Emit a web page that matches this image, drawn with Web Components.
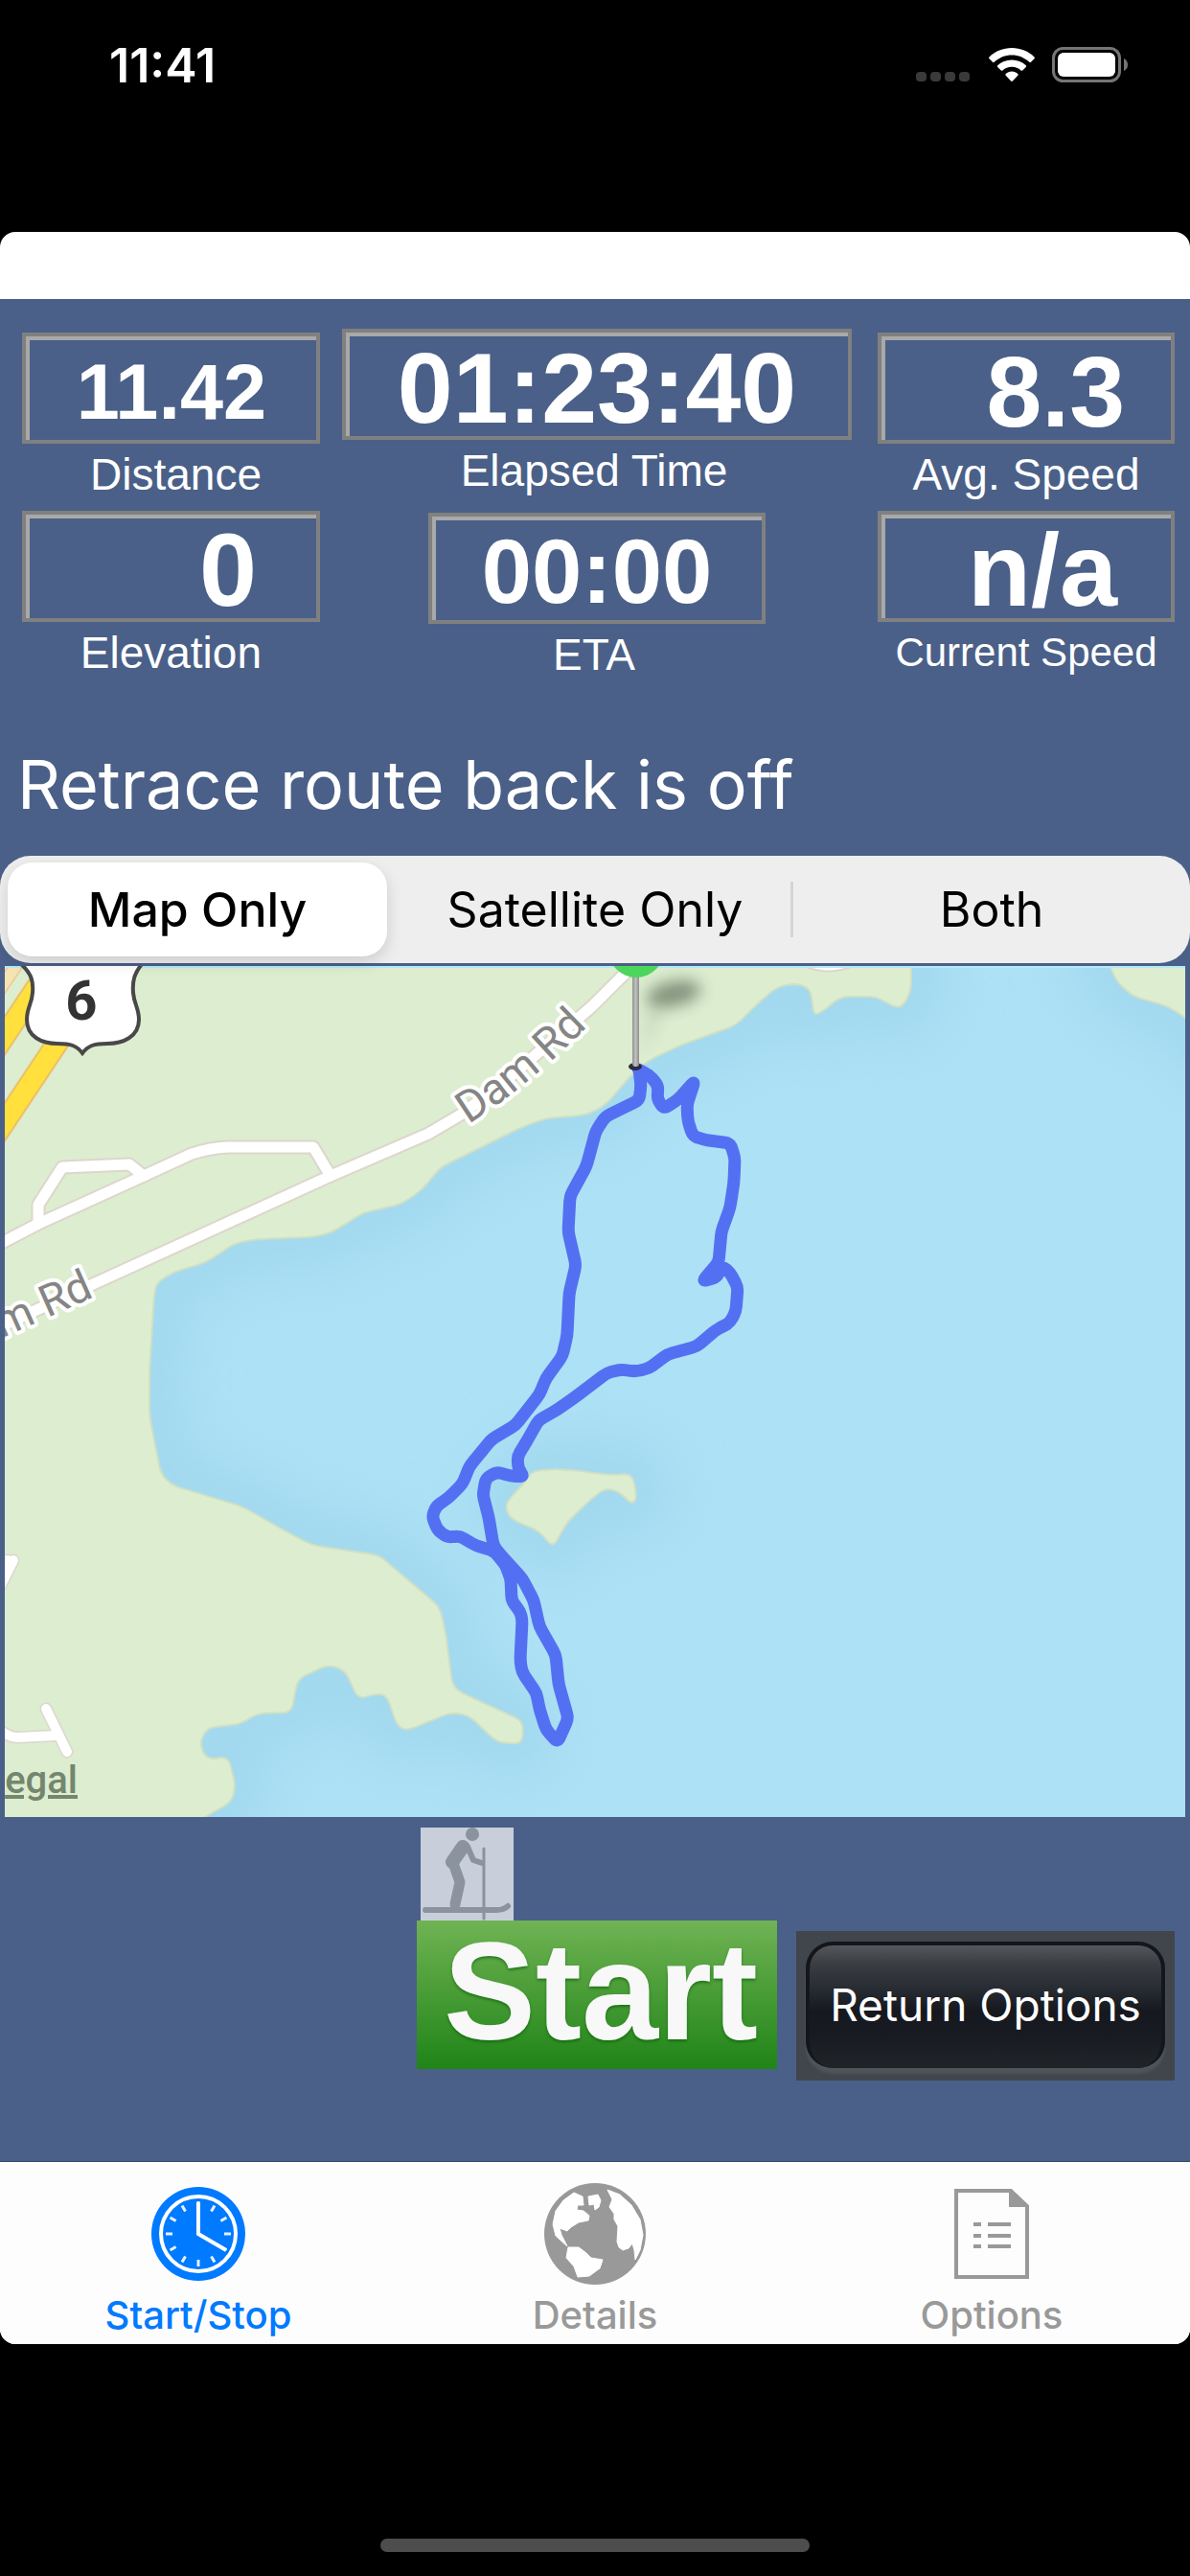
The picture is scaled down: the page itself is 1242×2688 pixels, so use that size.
<!DOCTYPE html>
<html lang="en">
<head>
<meta charset="utf-8">
<meta name="viewport" content="width=device-width">
<title>Route tracker</title>
<style>
  body { margin: 0; background: #000; color: #fff; font-family: Inter, "Liberation Sans", sans-serif; }
</style>
</head>
<body>
<tracker-app></tracker-app>

<script>
const define = (name, html, setup) => {
  const template = document.createElement('template');
  template.innerHTML = html;
  customElements.define(name, class extends HTMLElement {
    constructor() {
      super();
      this.attachShadow({ mode: 'open' }).append(template.content.cloneNode(true));
    }
    connectedCallback() { if (setup) setup(this, this.shadowRoot); }
  });
};

define('status-bar', `
<style>
  :host { display: flex; justify-content: space-between; align-items: flex-start; box-sizing: border-box; height: 242px; padding: 40px 64px 0 114px; }
  time { font-size: 50px; line-height: 56px; font-weight: 600; }
  .icons { display: flex; align-items: center; gap: 18px; padding-top: 9px; }
  svg { display: block; }
</style>
<time>11:41</time>
<div class="icons">
  <svg width="58" height="36" viewBox="0 0 58 36" fill="#3a3a3a"><rect x="0" y="25" width="11" height="10" rx="4"/><rect x="15" y="25" width="11" height="10" rx="4"/><rect x="30" y="25" width="11" height="10" rx="4"/><rect x="45" y="25" width="11" height="10" rx="4"/></svg>
  <svg width="48" height="36" viewBox="0 0 48 36" fill="#fff"><path d="M24 0C33 0 41.500 3.500 47.500 9.500Q48.300 10.400 47.500 11.300L44 14.800Q43.200 15.500 42.300 14.800C37 10 31 7.500 24 7.500S11 10 5.700 14.800Q4.800 15.500 4 14.800L.5 11.300Q-.3 10.400 .5 9.500C6.500 3.500 15 0 24 0Z"/><path d="M24 12.500C29.700 12.500 34.800 14.600 38.800 18.200Q39.600 19 38.800 19.900L35.200 23.400Q34.400 24.200 33.500 23.400C31 21 27.700 19.800 24 19.800S17 21 14.500 23.400Q13.600 24.200 12.800 23.400L9.200 19.900Q8.400 19 9.200 18.200C13.200 14.600 18.300 12.500 24 12.500Z"/><path d="M24 24.600C26.500 24.600 28.600 25.500 30.300 27Q31.100 27.800 30.300 28.700L24.900 34.600Q24 35.500 23.100 34.600L17.700 28.700Q16.900 27.800 17.700 27C19.400 25.500 21.500 24.600 24 24.600Z"/></svg>
  <svg width="80" height="37" viewBox="0 0 80 37"><rect x="1.500" y="1.500" width="69" height="34" rx="10" fill="none" stroke="#757575" stroke-width="3"/><rect x="6" y="6" width="60" height="25" rx="6" fill="#fff"/><path d="M75 12Q79 14 79 18.500T75 25Z" fill="#757575"/></svg>
</div>`);

define('stat-gauge', `
<style>
  :host { display: flex; flex-direction: column; font-family: "Liberation Sans", sans-serif; }
  .frame { border: 4px solid #808080; }
  output { display: flex; align-items: center; justify-content: var(--align, center); box-sizing: border-box; height: 108px;
    border: solid #a9a9a9; border-width: 4px 0 0 4px; padding: 3px var(--value-end, 4px) 0 0;
    font-size: var(--value-size, 104px); line-height: 100px; font-weight: 700; white-space: nowrap; }
  .label { font-size: var(--label-size, 46px); line-height: 64px; text-align: var(--label-align, center); padding-right: var(--label-end, 0); white-space: nowrap; }
</style>
<div class="frame"><output aria-labelledby="label"><slot></slot></output></div>
<div class="label" id="label"><slot name="label"></slot></div>`);

define('stat-board', `
<style>
  :host { display: grid; grid-template-columns: 311fr 532fr 314fr; column-gap: 23px; padding: 31px 16px 0 23px; }
  .side, .middle { display: flex; flex-direction: column; }
  .side { gap: 6px; padding-top: 4px; }
  .middle { gap: 12px; --label-end: 6px; }
  .side stat-gauge { --align: flex-end; }
  .left { --label-align: right; --label-end: 61px; }
  .right { padding-left: 4px; }
  .distance { --value-size: 81px; --value-end: 52px; }
  .elevation, .current { --value-size: 108px; --value-end: 62px; }
  .average { --value-end: 48px; }
  .current { --label-size: 42px; --value-end: 56px; }
  .eta { --value-size: 94px; align-self: center; width: 66%; }
</style>
<div class="side left">
  <stat-gauge class="distance">11.42<span slot="label">Distance</span></stat-gauge>
  <stat-gauge class="elevation">0<span slot="label">Elevation</span></stat-gauge>
</div>
<div class="middle">
  <stat-gauge>01:23:40<span slot="label">Elapsed Time</span></stat-gauge>
  <stat-gauge class="eta">00:00<span slot="label">ETA</span></stat-gauge>
</div>
<div class="side right">
  <stat-gauge class="average">8.3<span slot="label">Avg. Speed</span></stat-gauge>
  <stat-gauge class="current">n/a<span slot="label">Current Speed</span></stat-gauge>
</div>`);

define('map-switch', `
<style>
  :host { display: block; }
  fieldset { display: grid; grid-template-columns: repeat(3, 1fr); margin: 0; padding: 7px 0; border: 0; border-radius: 32px; background: #eee; color: #000; }
  label { position: relative; display: flex; align-items: center; justify-content: center; height: 98px; border-radius: 26px; font-size: 50px; line-height: 58px; }
  label:has(:checked) { background: #fff; font-weight: 500; margin: 0 10px 0 8px; box-shadow: 0 6px 16px rgba(0,0,0,.14); }
  .rule::after { content: ""; position: absolute; right: 0; top: 20px; bottom: 20px; width: 3px; background: #d4d4d6; }
  input { position: absolute; inset: 0; margin: 0; opacity: 0; }
</style>
<fieldset aria-label="Map type">
  <label><input type="radio" name="kind" checked>Map Only</label>
  <label class="rule"><input type="radio" name="kind">Satellite Only</label>
  <label><input type="radio" name="kind">Both</label>
</fieldset>`);

const LAND = [[-40,960],[951,960],[951,1033],[944,1048],[936,1052],[914,1040],[878,1040],[855,1058],[849,1058],[846,1032],[831,1026],[811,1030],[791,1047],[768,1070],[712,1090],[676,1107],[656,1125],[635,1150],[621,1160],[607,1164],[570,1167],[543,1177],[460,1218],[440,1242],[420,1256],[400,1261],[380,1265],[345,1287],[325,1291],[269,1293],[246,1297],[214,1318],[182,1327],[164,1338],[161,1350],[156,1433],[156,1477],[168,1538],[180,1550],[253,1572],[293,1595],[325,1612],[396,1623],[459,1677],[465,1703],[472,1757],[479,1765],[546,1796],[545,1820],[519,1818],[489,1790],[471,1787],[424,1806],[414,1800],[404,1770],[394,1767],[374,1773],[360,1743],[343,1737],[311,1752],[304,1787],[269,1788],[251,1799],[216,1803],[208,1820],[216,1836],[238,1833],[246,1863],[242,1880],[214,1896],[160,1940],[-40,1940]];
const ISLAND = [[555,1535],[580,1533],[607,1535],[633,1539],[660,1538],[665,1563],[659,1570],[647,1557],[633,1553],[622,1560],[593,1587],[577,1615],[563,1598],[533,1585],[527,1572],[533,1562],[547,1548]];
const CAPE = [[1150,990],[1166,1025],[1183,1040],[1219,1050],[1237,1062],[1290,1110],[1290,990]];
const ROUTE = [[666,1116],[678,1122],[687,1133],[686,1147],[693,1157],[708,1147],[725,1128],[717,1153],[718,1170],[723,1185],[733,1189],[762,1193],[767,1208],[766,1233],[762,1260],[753,1285],[750,1317],[733,1337],[748,1333],[754,1321],[762,1328],[770,1343],[768,1368],[762,1380],[747,1388],[727,1405],[697,1413],[677,1428],[663,1431],[647,1429],[633,1433],[600,1458],[580,1472],[562,1482],[552,1500],[540,1520],[541,1533],[547,1541],[533,1540],[518,1536],[507,1543],[504,1560],[510,1583],[515,1613],[523,1623],[545,1647],[557,1670],[563,1697],[580,1727],[583,1757],[593,1793],[582,1818],[570,1805],[563,1783],[560,1767],[545,1745],[543,1733],[545,1690],[543,1682],[534,1670],[533,1647],[527,1632],[515,1618],[497,1613],[480,1603],[467,1604],[457,1597],[451,1583],[455,1572],[468,1563],[483,1548],[490,1530],[513,1502],[538,1487],[563,1455],[570,1438],[587,1415],[592,1393],[594,1350],[601,1320],[593,1285],[595,1248],[612,1217],[622,1180],[632,1165],[667,1148],[669,1133],[667,1116]];

/* Closed path through the points, each corner rounded by up to `radius`. */
function rounded(points, radius) {
  const n = points.length;
  const near = (a, b) => {
    const d = Math.hypot(b[0] - a[0], b[1] - a[1]);
    const t = Math.min(radius, d / 2) / d;
    return (a[0] + (b[0] - a[0]) * t).toFixed(1) + ' ' + (a[1] + (b[1] - a[1]) * t).toFixed(1);
  };
  return points.map((p, i) => {
    const before = points[(i + n - 1) % n], after = points[(i + 1) % n];
    return (i ? 'L' : 'M') + near(p, before) + 'Q' + p[0] + ' ' + p[1] + ' ' + near(p, after);
  }).join('') + 'Z';
}

define('route-map', `
<style>
  :host { display: block; padding: 3px 5px 0; }
  svg { display: block; width: 100%; height: auto; overflow: hidden; background: #ade1f6; }
  .shallow path { fill: none; stroke: #a3d9ef; stroke-width: 80; }
  .land path { fill: #dcedd0; stroke: #cfdfc4; stroke-width: 2; }
  .casing { stroke: #ddd6cc; }
  .road { stroke: #fff; }
  .route { fill: none; stroke: #5470f2; stroke-width: 13; stroke-linejoin: round; }
  text { font-family: Roboto, sans-serif; }
  .street { font-size: 46px; fill: #858585; stroke: #fff; stroke-width: 8; stroke-linejoin: round; paint-order: stroke; }
  .number { font-size: 58px; font-weight: 700; fill: #333; }
  .legal { font-size: 40px; font-weight: 500; fill: #74866d; text-decoration: underline; text-decoration-thickness: 3px; }
</style>
<svg viewBox="5 1008 1232 888" role="img" aria-label="Recorded route on the lake">
  <defs>
    <filter id="soft" x="-20%" y="-20%" width="140%" height="140%"><feGaussianBlur stdDeviation="26"/></filter>
    <filter id="shade" x="-60%" y="-60%" width="220%" height="220%"><feGaussianBlur stdDeviation="8"/></filter>
    <linearGradient id="stem"><stop offset="0" stop-color="#8f948f"/><stop offset=".5" stop-color="#c0c0c0"/><stop offset="1" stop-color="#8c8c8c"/></linearGradient>
    <path id="damroad" d="M489 1173Q554 1133 632 1052"/>
    <g id="roads" fill="none" stroke-linejoin="round" stroke-linecap="round">
      <path d="M-10 1389L97 1340L345 1227L447 1183L481 1163L525 1130L618 1050L653 1015L680 985"/>
      <path d="M-10 1303L40 1277L150 1227L200 1204Q218 1198 238 1197H327L345 1227"/>
      <path d="M40 1277V1257L65 1218L135 1215L150 1227"/>
    </g>
    <g id="lanes" fill="none" stroke-linejoin="round" stroke-linecap="round">
      <path d="M14 1628L-2 1660M8 1628L0 1650"/><path d="M-4 1802Q8 1813 18 1813L59 1811"/><path d="M48 1783L70 1828"/>
    </g>
  </defs>
  <g class="shallow" filter="url(#soft)"></g>
  <g class="land"></g>
  <path d="M-5 1040L22 1000" fill="none" stroke="#f0c890" stroke-width="14"/><path d="M-5 1040L22 1000" fill="none" stroke="#f6e3b4" stroke-width="11"/>
  <path d="M-8 1100L60 998M-8 1190L130 983" fill="none" stroke="#ecc06a" stroke-width="24"/>
  <path d="M-8 1100L60 998M-8 1190L130 983" fill="none" stroke="#ffe03c" stroke-width="20"/>
  <use href="#roads" class="casing" stroke-width="15"/><use href="#roads" class="road" stroke-width="11"/>
  <use href="#lanes" class="casing" stroke-width="13"/><use href="#lanes" class="road" stroke-width="10"/>
  <path d="M835 1006Q864 1021 895 1006" fill="#fff" stroke="#ddd6cc" stroke-width="2"/>
  <rect x="5" y="1008" width="1232" height="2" fill="#b4eafa"/>
  <path d="M22 1006C33 1016 35 1024 34 1036C33 1048 28 1052 28 1064C28 1082 44 1089 60 1089C74 1089 80 1091 86 1099C92 1091 98 1089 112 1089C128 1089 145 1082 145 1064C145 1052 140 1048 139 1036C138 1024 140 1016 148 1006" fill="#fff" stroke="#484848" stroke-width="4"/>
  <text class="number" x="85" y="1064" text-anchor="middle">6</text>
  <text class="street"><textPath href="#damroad">Dam Rd</textPath></text>
  <text class="street" text-anchor="end" transform="translate(99 1353) rotate(-24)">m Rd</text>
  <a href="#legal"><text class="legal" x="81" y="1871" text-anchor="end">egal</text></a>
  <ellipse cx="703" cy="1037" rx="29" ry="13" transform="rotate(-12 703 1037)" fill="#2c3a2c" opacity=".5" filter="url(#shade)"/>
  <path d="M682 1050L690 1055L668 1100Z" fill="#2c3a2c" opacity=".2" filter="url(#shade)"/>
  <path class="route"/>
  <ellipse cx="663" cy="1113" rx="7" ry="4" fill="#2b2b45"/>
  <rect x="660" y="1016" width="7" height="97" rx="3" fill="url(#stem)"/>
  <circle cx="664" cy="991" r="29" fill="#4cd65c"/>
</svg>`, (host, root) => {
  const svgPath = (d) => {
    const path = document.createElementNS('http://www.w3.org/2000/svg', 'path');
    path.setAttribute('d', d);
    return path;
  };
  for (const shape of [LAND, ISLAND, CAPE]) {
    const d = rounded(shape, 9);
    root.querySelector('.shallow').append(svgPath(d));
    root.querySelector('.land').append(svgPath(d));
  }
  root.querySelector('.route').setAttribute('d', rounded(ROUTE, 5));
});

define('ride-controls', `
<style>
  :host { display: flex; justify-content: flex-end; align-items: flex-start; gap: 20px; box-sizing: border-box; min-height: 359px; padding: 11px 16px 0; }
  button { display: block; box-sizing: border-box; border: 0; margin: 0; padding: 0; color: #fff; white-space: nowrap; }
  .go { display: flex; flex-direction: column; align-items: flex-start; }
  svg { display: block; margin-left: 4px; }
  .start { width: 376px; height: 155px; padding: 0 0 6px 8px; background: linear-gradient(#70b354, #1f8417); color: #f8f8f8;
    font: 700 144px/148px "Liberation Sans", sans-serif; text-shadow: 0 2px 3px rgba(0,90,0,.6); }
  .return { width: 395px; height: 156px; margin-top: 108px; padding: 11px 10px 13px; background: #41454c; font: 400 46px/56px Inter, sans-serif; }
  .face { display: flex; align-items: center; justify-content: center; height: 100%; box-sizing: border-box; padding-bottom: 4px; border: 4px solid #14161a; border-bottom-width: 0; border-radius: 28px;
    background: linear-gradient(#54575c 0, #3a3e43 15%, #252930 38%, #15181e 54%, #181b22 75%, #212427 100%); box-shadow: 0 6px 3px #50545b; }
</style>
<div class="go">
  <svg width="97" height="97" viewBox="0 0 97 97" role="img" aria-label="Cross-country skiing">
    <rect width="97" height="97" fill="#c8cfda"/>
    <g fill="none" stroke="#8b939e" stroke-linejoin="round" stroke-linecap="round">
      <circle cx="54" cy="7" r="7" fill="#8b939e" stroke="none"/>
      <path d="M46 20L34 37L41 57L36 80" stroke-width="11"/><path d="M44 20L33 36" stroke-width="14"/>
      <path d="M49 20L55 34L64 37" stroke-width="6"/>
      <path d="M66 22V95" stroke-width="3"/><path d="M5 86H79Q87 86 91 82" stroke-width="6"/>
    </g>
  </svg>
  <button class="start" type="button">Start</button>
</div>
<button class="return" type="button"><span class="face">Return Options</span></button>`);

define('tab-item', `
<style>
  :host { flex: 1; display: block; }
  a { display: flex; flex-direction: column; align-items: center; color: inherit; text-decoration: none; font-size: 40px; line-height: 58px; font-weight: 500; }
  .icon { display: flex; align-items: center; height: 112px; }
</style>
<a href="#"><span class="icon"><slot name="icon"></slot></span><slot></slot></a>`);

define('tab-bar', `
<style>
  :host { display: block; background: #fdfdfd; border-top: 1px solid #34476a; }
  nav { display: flex; box-sizing: border-box; height: 190px; padding-top: 19px; color: #999; }
  .active { color: #007aff; }
  svg { display: block; }
</style>
<nav>
  <tab-item class="active">
    <svg slot="icon" width="98" height="98" viewBox="-49 -49 98 98">
      <circle r="49" fill="#007aff"/><circle r="39" fill="none" stroke="#fff" stroke-width="4"/>
      <g stroke="#e6f2ff" stroke-width="3"><path d="M0 27V34M0 -27V-34M27 0H34M-27 0H-34"/><path d="M0 27V34M0 -27V-34M27 0H34M-27 0H-34" transform="rotate(30)"/><path d="M0 27V34M0 -27V-34M27 0H34M-27 0H-34" transform="rotate(60)"/></g>
      <path d="M0 -33V0L29 17" fill="none" stroke="#fff" stroke-width="4"/>
    </svg>Start/Stop</tab-item>
  <tab-item>
    <svg slot="icon" width="106" height="106" viewBox="0 0 106 106">
      <circle cx="53" cy="53" r="53" fill="#999"/>
      <g fill="#fff" stroke="#fff" stroke-linejoin="round">
        <path d="M31 10L20 18L12 29L9 43L12 55L24 66L18 54L16 47L24 50L28 46L36 41L46 39L47 34L41 29L34 28L35 23L41 23L40 14Z"/>
        <path d="M46 14L56 12L59 18L57 25L53 28L52 22L47 23Z"/>
        <path d="M66 7L79 12L91 23L100 38L103 54L100 70L95 80L94 70L92 63L88 68L82 70L78 67L76 61L77 45L73 38L73 32L68 25L71 17Z"/>
        <path d="M25 67L36 67L44 73L49 78L61 80L58 89L47 97L35 98L31 87L23 78Z"/>
      </g>
    </svg>Details</tab-item>
  <tab-item>
    <svg slot="icon" width="78" height="94" viewBox="0 0 78 94" fill="none" stroke="#999" stroke-width="4">
      <path d="M2 2H59L76 18V92H2Z"/><path d="M58 2V18H76Z" fill="#999" stroke-width="2"/>
      <path d="M20 37H28M35 37H59M20 49H28M35 49H59M20 60H28M35 60H59"/>
    </svg>Options</tab-item>
</nav>`);

define('tracker-app', `
<style>
  :host { display: flex; flex-direction: column; min-height: 100vh; }
  .window { border-radius: 16px; overflow: hidden; background: #fff; }
  .sheet { margin-top: 70px; background: #4a6088; overflow: hidden; }
  p { margin: 0; padding: 52px 18px 22px; font-size: 70px; line-height: 104px; }
  footer { flex: 1; display: flex; align-items: flex-end; justify-content: center; padding-bottom: 25px; }
  .home { width: 36%; height: 14px; border-radius: 7px; background: #4d4d4d; }
</style>
<status-bar></status-bar>
<div class="window">
  <main class="sheet">
    <stat-board></stat-board>
    <p>Retrace route back is off</p>
    <map-switch></map-switch>
    <route-map></route-map>
    <ride-controls></ride-controls>
  </main>
  <tab-bar></tab-bar>
</div>
<footer><div class="home"></div></footer>`);
</script>
</body>
</html>
